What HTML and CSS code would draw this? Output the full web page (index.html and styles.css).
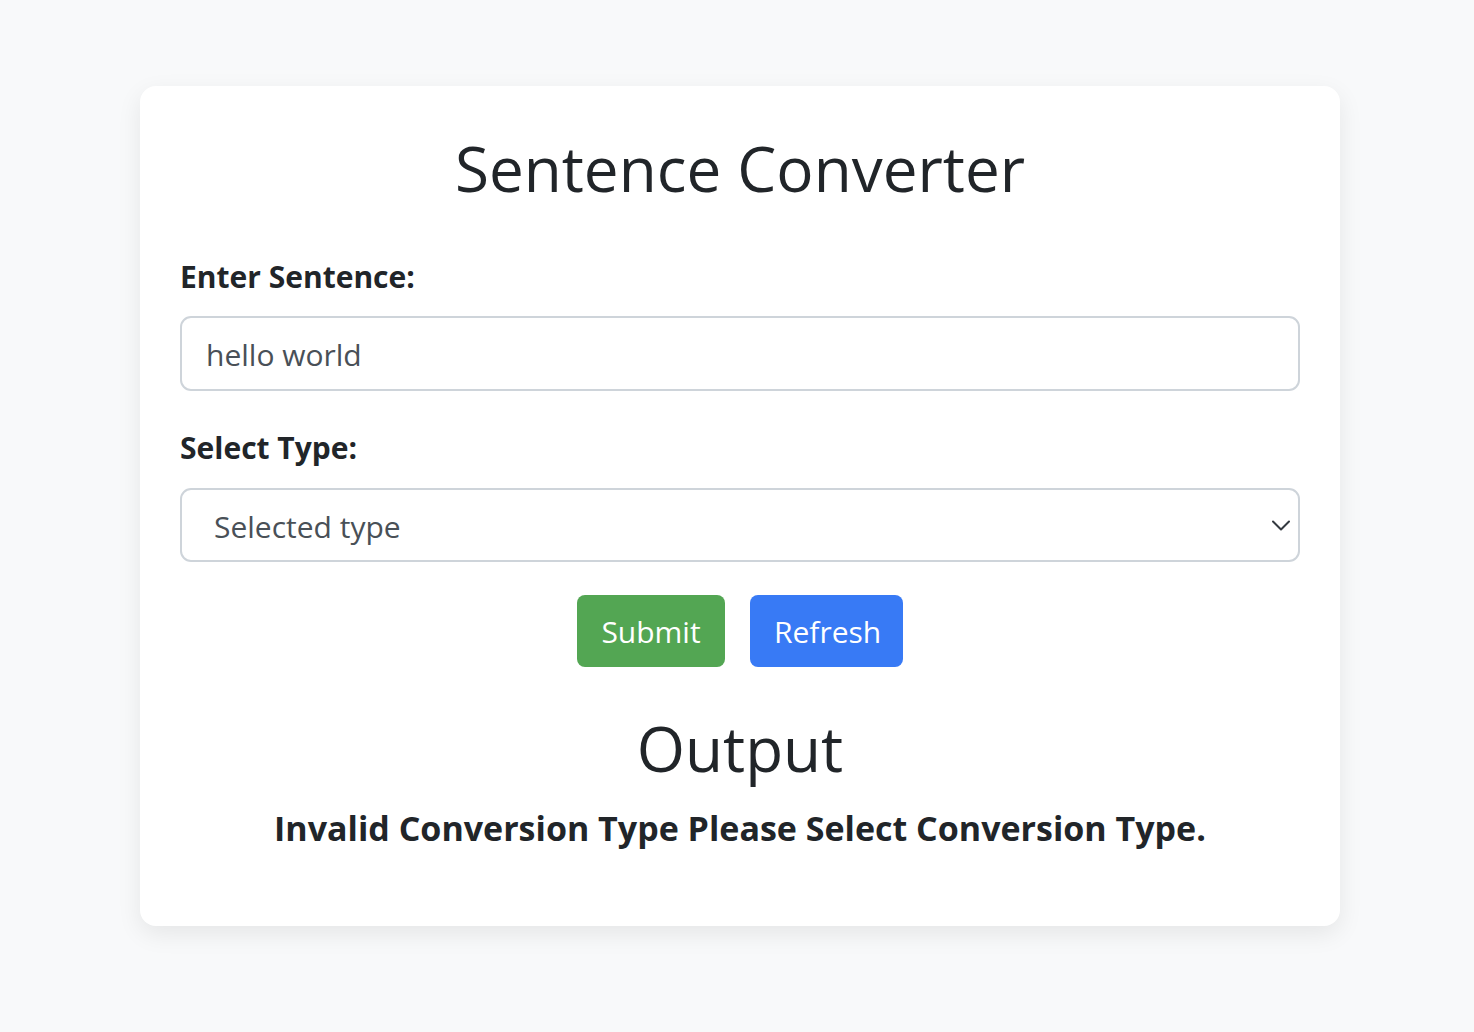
FILE: index.html
```html
<!DOCTYPE html>
<html lang="en">
<head>
<meta charset="utf-8">
<title>Sentence Converter</title>
<link rel="stylesheet" href="styles.css">
</head>
<body>
<div class="page">
  <main class="card">
    <h1 class="title">Sentence Converter</h1>
    <form class="form">
      <label class="label" for="sentence">Enter Sentence:</label>
      <input class="field input" id="sentence" type="text" value="hello world">
      <label class="label label-second" for="type">Select Type:</label>
      <div class="select-wrap">
        <select class="field select" id="type">
          <option>Selected type</option>
          <option>Upper case</option>
          <option>Lower case</option>
        </select>
        <svg class="chevron" width="18" height="11" viewBox="0 0 18 11" aria-hidden="true">
          <polyline points="1,1.5 9,9.5 17,1.5" fill="none" stroke="#343a40" stroke-width="2" stroke-linecap="round" stroke-linejoin="round"/>
        </svg>
      </div>
      <div class="actions">
        <button type="button" class="btn btn-submit">Submit</button>
        <button type="button" class="btn btn-refresh">Refresh</button>
      </div>
    </form>
    <h2 class="output-title">Output</h2>
    <p class="message">Invalid Conversion Type Please Select Conversion Type.</p>
  </main>
</div>
</body>
</html>
```
FILE: styles.css
```css
* { box-sizing: border-box; }

html, body {
  margin: 0;
  padding: 0;
  background: #f8f9fa;
}

body {
  font-family: "Open Sans", "Noto Sans", sans-serif;
  color: #212529;
}

.page {
  padding: 86px 0 106px 140px;
}

.card {
  width: 1200px;
  background: #ffffff;
  border-radius: 16px;
  box-shadow: 0 8px 24px rgba(0, 0, 0, 0.08);
  padding: 45px 40px 74px;
}

.title {
  margin: 0;
  text-align: center;
  font-size: 62px;
  line-height: 74px;
  font-weight: 400;
}

.form {
  display: flex;
  flex-direction: column;
  margin-top: 52px;
}

.label {
  font-size: 30px;
  line-height: 40px;
  font-weight: 700;
  margin-bottom: 19px;
}

.label-second {
  margin-top: 37px;
  margin-bottom: 20px;
}

.field {
  width: 100%;
  border: 2px solid #ced4da;
  border-radius: 11px;
  background: #ffffff;
  color: #495057;
  font-family: "Open Sans", "Noto Sans", sans-serif;
  font-size: 30px;
  outline: none;
}

.input {
  height: 75px;
  padding: 2px 24px 0;
}

.select-wrap {
  position: relative;
}

.select {
  height: 74px;
  padding: 2px 60px 0 32px;
  appearance: none;
  -webkit-appearance: none;
  display: block;
}

.chevron {
  position: absolute;
  right: 10px;
  top: 32px;
  pointer-events: none;
}

.actions {
  display: flex;
  justify-content: center;
  gap: 25px;
  margin-top: 33px;
}

.btn {
  height: 72px;
  border: none;
  border-radius: 8px;
  color: #ffffff;
  font-family: "Open Sans", "Noto Sans", sans-serif;
  font-size: 30px;
  padding: 0 24px;
  cursor: pointer;
}

.btn-submit {
  width: 148px;
  background: #53a653;
}

.btn-refresh {
  width: 153px;
  background: #387af5;
}

.output-title {
  margin: 44px 0 0;
  text-align: center;
  font-size: 62px;
  line-height: 74px;
  font-weight: 400;
}

.message {
  margin: 19px 0 0;
  text-align: center;
  font-size: 34px;
  line-height: 48px;
  font-weight: 700;
}
```
